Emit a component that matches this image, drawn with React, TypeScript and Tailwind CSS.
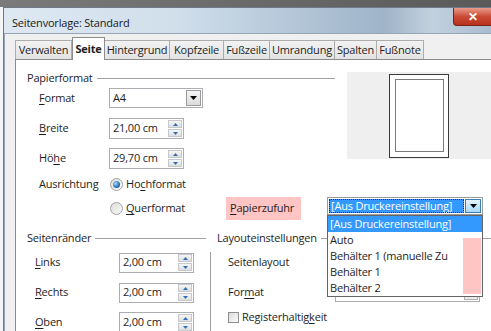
import React from 'react'

const tabs = [
  { label: 'Verwalten', w: 'w-[57px]' },
  { label: 'Seite', w: 'w-[33px]', active: true },
  { label: 'Hintergrund', w: 'w-[66px]' },
  { label: 'Kopfzeile', w: 'w-[55px]' },
  { label: 'Fußzeile', w: 'w-[47px]' },
  { label: 'Umrandung', w: 'w-[66px]' },
  { label: 'Spalten', w: 'w-[43px]' },
  { label: 'Fußnote', w: 'w-[48px]' },
]

const listItems = ['[Aus Druckereinstellung]', 'Auto', 'Behälter 1 (manuelle Zu', 'Behälter 1', 'Behälter 2']

// label with one underlined mnemonic letter
function Mn({ pre, u, post }: { pre?: string; u: string; post?: string }) {
  return (
    <span>
      {pre}
      <span className="underline underline-offset-2">{u}</span>
      {post}
    </span>
  )
}

function DownArrow({ color = '#000' }: { color?: string }) {
  return (
    <svg width="7" height="4" viewBox="0 0 7 4">
      <polygon points="0,0 7,0 3.5,4" fill={color} />
    </svg>
  )
}

function SpinField({ value, w = 'w-[75px]', h = 'h-[21px]' }: { value: string; w?: string; h?: string }) {
  return (
    <div className={`${w} ${h} flex items-center border border-[#abadb3] bg-white`}>
      <span className="flex-1 pl-[3px]">{value}</span>
      <div className="flex flex-col gap-px pr-px">
        <div className="w-[14px] h-[8px] flex items-center justify-center border border-[#c5c9cf] bg-gradient-to-b from-[#f6f6f6] to-[#dedede]">
          <svg width="5" height="3" viewBox="0 0 5 3"><polygon points="0,3 5,3 2.5,0" fill="#2f6fb6" /></svg>
        </div>
        <div className="w-[14px] h-[8px] flex items-center justify-center border border-[#c5c9cf] bg-gradient-to-b from-[#f6f6f6] to-[#dedede]">
          <svg width="5" height="3" viewBox="0 0 5 3"><polygon points="0,0 5,0 2.5,3" fill="#2f6fb6" /></svg>
        </div>
      </div>
    </div>
  )
}

function Radio({ checked }: { checked?: boolean }) {
  return (
    <div className="w-[13px] h-[13px] rounded-full border border-[#a2a2a2] bg-gradient-to-br from-[#dcdcdc] to-[#fbfbfb] flex items-center justify-center">
      {checked && <div className="w-[7px] h-[7px] rounded-full bg-[radial-gradient(circle_at_35%_35%,#9fdcff,#1d5fa8_70%)]" />}
    </div>
  )
}

function Header({ title, line }: { title: string; line: string }) {
  return (
    <div className="flex items-center h-[13px]">
      <span>{title}</span>
      <div className={`ml-[4px] h-px bg-[#a0a0a0] ${line}`} />
    </div>
  )
}

export default function App() {
  return (
    <div className="w-[491px] h-[331px] overflow-hidden flex flex-col bg-[#e8edf2] text-[11px] tracking-[-0.2px] text-[#1e1e1e] font-['Open_Sans',sans-serif]">
      {/* window behind */}
      <div className="h-[7px] shrink-0 bg-gradient-to-r from-[#7b7b7b] via-[#6a6a6a] to-[#5a5a5a]" />
      <div className="flex-1 flex min-h-0">
        <div className="w-[3px] bg-[#f3f5f7]" />
        <div className="flex-1 flex flex-col border-l border-t border-[#6d7b89] min-w-0">
          {/* title bar */}
          <div className="h-[25px] shrink-0 flex items-start bg-[linear-gradient(to_right,#dde8f2_0%,#d1dfeb_35%,#b3c6d8_60%,#9fb4c9_78%,#c3d1de_88%,#a9bccf_100%)]">
            <span className="ml-[8px] mt-[7px] text-[#1a1a1a]">Seitenvorlage: Standard</span>
            <div className="ml-auto w-[38px] h-[18px] rounded-bl-[4px] border border-[#7a2318] border-t-0 border-r-0 bg-gradient-to-b from-[#e99b8b] via-[#c94a35] to-[#b8321c] flex items-center justify-center">
              <span className="text-white font-bold text-[12px] leading-none">✕</span>
            </div>
          </div>
          {/* dialog body */}
          <div className="flex-1 flex flex-col bg-[#f0f0f0] border-t border-l border-[#98a6b4] min-h-0 pl-[10px]">
            {/* tabs */}
            <div className="h-[24px] shrink-0 flex items-end mt-[1px]">
              {tabs.map((t) =>
                t.active ? (
                  <div key={t.label} className={`${t.w} h-[23px] -mb-px z-10 bg-white border border-[#8c8c8c] border-b-0 flex items-center justify-center font-bold`}>
                    {t.label}
                  </div>
                ) : (
                  <div key={t.label} className={`${t.w} h-[19px] -ml-px first:ml-0 bg-gradient-to-b from-[#f2f2f2] to-[#e3e3e3] border border-[#acacac] border-b-0 flex items-center justify-center`}>
                    {t.label}
                  </div>
                )
              )}
            </div>
            {/* tab page */}
            <div className="flex-1 relative bg-white border-l border-t border-[#8c8c8c] pl-[11px] pt-[12px] min-h-0">
              {/* Papierformat + preview */}
              <div className="flex">
                <div className="w-[308px] flex flex-col">
                  <Header title="Papierformat" line="flex-1" />
                  <div className="flex items-center mt-[3px] h-[20px]">
                    <span className="w-[82px] pl-[12px]"><Mn u="F" post="ormat" /></span>
                    <div className="w-[94px] h-[20px] flex items-center border border-[#abadb3] bg-white">
                      <span className="flex-1 pl-[3px]">A4</span>
                      <div className="w-[15px] h-[16px] mr-px flex items-center justify-center border border-[#9a9a9a] bg-gradient-to-b from-[#f4f4f4] to-[#dcdcdc]">
                        <DownArrow />
                      </div>
                    </div>
                  </div>
                  <div className="flex items-center mt-[10px]">
                    <span className="w-[82px] pl-[12px]"><Mn u="B" post="reite" /></span>
                    <SpinField value="21,00 cm" />
                  </div>
                  <div className="flex items-center mt-[9px]">
                    <span className="w-[82px] pl-[12px]"><Mn pre="Hö" u="h" post="e" /></span>
                    <SpinField value="29,70 cm" />
                  </div>
                </div>
                <div className="ml-[12px] flex-1 h-[87px] bg-[#efefef] flex justify-center items-center">
                  <div className="w-[60px] h-[84px] border-[1.5px] border-[#3a3a3a] bg-white flex items-center justify-center">
                    <div className="w-[49px] h-[73px] border-[1.5px] border-[#7a7a7a]" />
                  </div>
                </div>
              </div>
              {/* Ausrichtung */}
              <div className="flex items-center mt-[8px] h-[14px]">
                <span className="w-[83px] pl-[12px]">Ausrichtung</span>
                <Radio checked />
                <span className="ml-[3px]"><Mn pre="Ho" u="c" post="hformat" /></span>
              </div>
              {/* Querformat + Papierzufuhr */}
              <div className="flex items-center mt-[6px] h-[23px]">
                <div className="w-[83px]" />
                <Radio />
                <span className="ml-[3px] w-[100px]"><Mn u="Q" post="uerformat" /></span>
                <div className="w-[75px] h-[23px] bg-[#ffc4c4] flex items-center pl-[4px]">
                  <Mn u="P" post="apierzufuhr" />
                </div>
                <div className="ml-[26px] relative self-start z-20">
                  <div className="w-[156px] h-[18px] flex items-center border border-[#9a9a9a] bg-white p-px">
                    <div className="flex-1 h-full flex items-center bg-[#3399ff] text-white pl-[2px] outline-1 outline-dotted outline-[#0b2b55] -outline-offset-1">
                      [Aus Druckereinstellung]
                    </div>
                    <div className="w-[16px] h-[14px] ml-px flex items-center justify-center border border-[#3c7fb1] bg-gradient-to-b from-[#e5f4fc] to-[#a7d9f5]">
                      <DownArrow />
                    </div>
                  </div>
                  {/* dropdown list */}
                  <div className="absolute top-full left-0 w-[156px] border border-[#646464] bg-white">
                    {listItems.map((it, i) => (
                      <div key={it} className={`h-[16px] flex items-center pl-[2px] ${i === 0 ? 'bg-[#3399ff] text-white' : ''}`}>
                        {it}
                      </div>
                    ))}
                    <div className="absolute right-[1px] top-[22px] w-[18px] h-[56px] bg-[#ffc4c4]" />
                  </div>
                </div>
              </div>
              {/* bottom section */}
              <div className="flex mt-[12px]">
                <div className="w-[179px]">
                  <Header title="Seitenränder" line="flex-1" />
                </div>
                <div className="ml-[11px] flex-1">
                  <Header title="Layouteinstellungen" line="flex-1" />
                </div>
              </div>
              <div className="flex mt-[7px]">
                <div className="w-[183px] flex flex-col">
                  <div className="flex items-center h-[21px]">
                    <span className="w-[92px] pl-[8px]"><Mn u="L" post="inks" /></span>
                    <SpinField value="2,00 cm" h="h-[20px]" />
                  </div>
                  <div className="flex items-center h-[21px] mt-[9px]">
                    <span className="w-[92px] pl-[8px]"><Mn u="R" post="echts" /></span>
                    <SpinField value="2,00 cm" h="h-[20px]" />
                  </div>
                  <div className="flex items-center h-[21px] mt-[9px]">
                    <span className="w-[92px] pl-[8px]"><Mn u="O" post="ben" /></span>
                    <SpinField value="2,00 cm" />
                  </div>
                </div>
                <div className="flex-1 border-l border-[#a0a0a0] pl-[17px] flex flex-col">
                  <div className="flex items-center h-[21px]">
                    <span className="w-[107px]">Seitenlayout</span>
                    <div className="w-[145px] h-[19px] border border-[#abadb3] bg-white" />
                  </div>
                  <div className="flex items-center h-[21px] mt-[9px]">
                    <span className="w-[107px]"><Mn pre="For" u="m" post="at" /></span>
                    <div className="w-[145px] h-[18px] border border-[#abadb3] bg-white flex justify-end items-end p-px">
                      <div className="w-[14px] h-[4px] border border-[#b0b0b0] bg-[#ececec]" />
                    </div>
                  </div>
                  <div className="flex items-center mt-[8px] h-[13px]">
                    <div className="w-[11px] h-[11px] border border-[#8e8f8f] bg-gradient-to-br from-[#dcdcdc] to-[#fbfbfb]" />
                    <span className="ml-[3px]"><Mn pre="Registerhaltig" u="k" post="eit" /></span>
                  </div>
                </div>
              </div>
            </div>
          </div>
        </div>
      </div>
    </div>
  )
}
